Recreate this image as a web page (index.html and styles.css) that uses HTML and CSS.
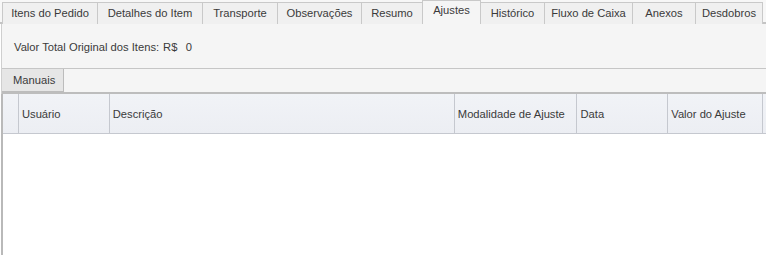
FILE: index.html
```html
<!DOCTYPE html>
<html lang="pt-BR">
<head>
<meta charset="utf-8">
<title>Ajustes</title>
<link rel="stylesheet" href="styles.css">
</head>
<body>
<div class="window">
  <div class="tabs">
    <div class="tab w1">Itens do Pedido</div>
    <div class="tab w2">Detalhes do Item</div>
    <div class="tab w3">Transporte</div>
    <div class="tab w4">Observações</div>
    <div class="tab w5">Resumo</div>
    <div class="tab w6 active">Ajustes</div>
    <div class="tab w7">Histórico</div>
    <div class="tab w8">Fluxo de Caixa</div>
    <div class="tab w9">Anexos</div>
    <div class="tab w10">Desdobros</div>
  </div>
  <div class="panel">
    <div class="summary">
      <span>Valor Total Original dos Itens:</span>
      <span class="value">R$&nbsp; 0</span>
    </div>
    <div class="subtabs">
      <div class="subtab">Manuais</div>
    </div>
    <div class="grid">
      <div class="grid-header">
        <div class="col c0"></div>
        <div class="col c1">Usuário</div>
        <div class="col c2">Descrição</div>
        <div class="col c3">Modalidade de Ajuste</div>
        <div class="col c4">Data</div>
        <div class="col c5">Valor do Ajuste</div>
        <div class="col c6"></div>
      </div>
      <div class="grid-body"></div>
    </div>
  </div>
</div>
</body>
</html>
```

FILE: styles.css
```css
* { box-sizing: border-box; }
html, body { margin: 0; padding: 0; }
body {
  width: 766px;
  height: 255px;
  overflow: hidden;
  background: #ffffff;
  font-family: "Liberation Sans", Arial, sans-serif;
  font-size: 11.2px;
  color: #3a3a3a;
}
.window { display: flex; flex-direction: column; height: 255px; }

.tabs {
  display: flex;
  height: 24px;
  padding: 2px 0 0 2px;
  border-bottom: 2px solid #c4c4c4;
  background: #f7f7f7;
  position: relative;
}
.tab {
  height: 22px;
  border: 1px solid #c9c9c9;
  border-right: none;
  border-bottom: none;
  background: #f0f0f0;
  display: flex;
  align-items: center;
  justify-content: center;
  padding-bottom: 1px;
  white-space: nowrap;
}
.tab.w10 { border-right: 1px solid #c9c9c9; }
.w1 { width: 95px; }
.w2 { width: 105px; }
.w3 { width: 75px; }
.w4 { width: 84px; }
.w5 { width: 61px; }
.w6 { width: 59px; }
.w7 { width: 63px; }
.w8 { width: 88px; }
.w9 { width: 63px; }
.w10 { width: 68px; }
.tab.active {
  height: 24px;
  margin-top: -2px;
  margin-bottom: -2px;
  background: #f5f5f5;
  border-right: 1px solid #c9c9c9;
  padding-bottom: 5px;
  position: relative;
  z-index: 1;
}
.tab.active + .tab { border-left: none; }

.panel {
  flex: 1;
  display: flex;
  flex-direction: column;
  background: #f5f5f5;
  margin-left: 1px;
  border-left: 1px solid #cfcfcf;
}
.summary {
  height: 45px;
  display: flex;
  align-items: center;
  gap: 4px;
  padding: 2px 0 0 12px;
  border-bottom: 1px solid #c6c6c6;
}
.value { word-spacing: 1px; }
.subtabs {
  display: flex;
  height: 25px;
  border-bottom: 2px solid #bdbdbd;
}
.subtab {
  width: 62px;
  height: 23px;
  background: #e6e6e6;
  border: 1px solid #bcbcbc;
  border-top: none;
  border-left: none;
  display: flex;
  align-items: center;
  padding-left: 11px;
}
.grid {
  flex: 1;
  display: flex;
  flex-direction: column;
  background: #ffffff;
  margin-left: -1px;
  border-left: 2px solid #b9b9b9;
}
.grid-header {
  display: flex;
  height: 40px;
  background: linear-gradient(#f1f3f7, #eceef3);
  border-bottom: 1px solid #c5c8cf;
}
.col {
  border-right: 1px solid #c5c8cf;
  display: flex;
  align-items: center;
  padding-left: 3px;
  white-space: nowrap;
}
.c0 { width: 16px; }
.c1 { width: 91px; }
.c2 { width: 346px; }
.c3 { width: 123px; }
.c4 { width: 91px; }
.c5 { width: 95px; }
.c6 { flex: 1; border-right: none; }
.grid-body { flex: 1; }
```
